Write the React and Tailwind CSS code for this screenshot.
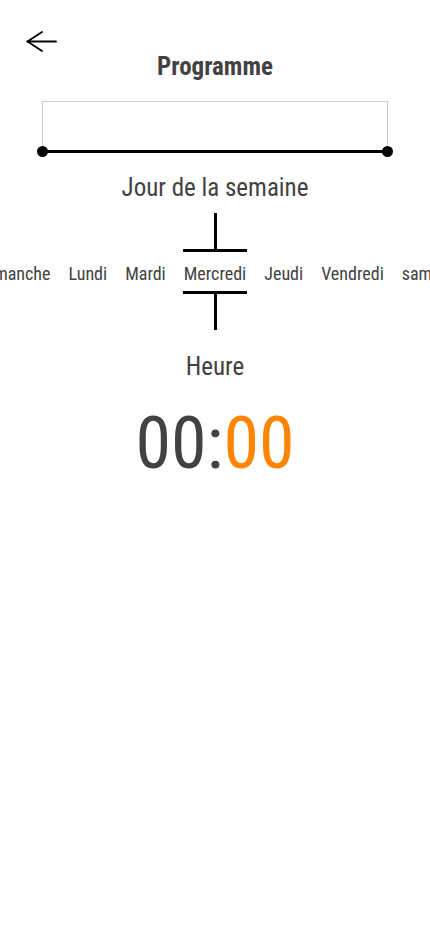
import React from "react";

const days = ["Dimanche", "Lundi", "Mardi"];
const daysAfter = ["Jeudi", "Vendredi", "samedi"];

export default function App() {
  return (
    <div
      className="relative w-[430px] h-[932px] bg-white text-[#424242] overflow-hidden"
      style={{ fontFamily: '"Roboto Condensed", Roboto, "Liberation Sans", sans-serif' }}
    >
      <div className="pl-[26px] pt-[31px] h-[51px]">
        <svg width="31" height="21" viewBox="0 0 31 21" fill="none" stroke="#000" strokeWidth="1.8" strokeLinecap="round">
          <line x1="1.5" y1="10.5" x2="30" y2="10.5" />
          <line x1="1.5" y1="10.5" x2="16" y2="1" />
          <line x1="1.5" y1="10.5" x2="16" y2="20" />
        </svg>
      </div>
      <h1 className="mt-[1px] text-center text-[25px] leading-[30px] font-bold">Programme</h1>

      <div className="mt-[19px] flex justify-center">
        <div className="relative w-[346px] h-[52px] border border-b-0 border-[#cccccc] box-border">
          <div className="absolute left-[-1px] right-[-1px] bottom-0 h-[3px] bg-black" />
          <div className="absolute left-[-6px] bottom-[-4px] w-[11px] h-[11px] rounded-full bg-black" />
          <div className="absolute right-[-6px] bottom-[-4px] w-[11px] h-[11px] rounded-full bg-black" />
        </div>
      </div>

      <div className="mt-[20px] text-center text-[25px] leading-[30px]">Jour de la semaine</div>

      <div className="mt-[10px] flex flex-col items-center">
        <div className="w-[3px] h-[36px] bg-black" />
        <div className="w-[64px] h-[3px] bg-black" />
      </div>
      <div className="flex items-center w-[430px] h-[39px] pt-[4px] overflow-hidden text-[18px] leading-[22px]">
        <div className="flex-1 min-w-0 flex justify-end gap-[18px] pr-[18px] whitespace-nowrap">
          {days.map((d) => (
            <span key={d}>{d}</span>
          ))}
        </div>
        <span className="whitespace-nowrap">Mercredi</span>
        <div className="flex-1 min-w-0 flex justify-start gap-[18px] pl-[18px] whitespace-nowrap overflow-hidden">
          {daysAfter.map((d) => (
            <span key={d}>{d}</span>
          ))}
        </div>
      </div>
      <div className="flex flex-col items-center">
        <div className="w-[64px] h-[3px] bg-black" />
        <div className="w-[3px] h-[36px] bg-black" />
      </div>

      <div className="mt-[22px] text-center text-[25px] leading-[30px]">Heure</div>

      <div className="mt-[20px] text-center text-[72px] leading-[84px] font-normal">
        <span>00:</span>
        <span className="text-[#ff8400]">00</span>
      </div>
    </div>
  );
}
